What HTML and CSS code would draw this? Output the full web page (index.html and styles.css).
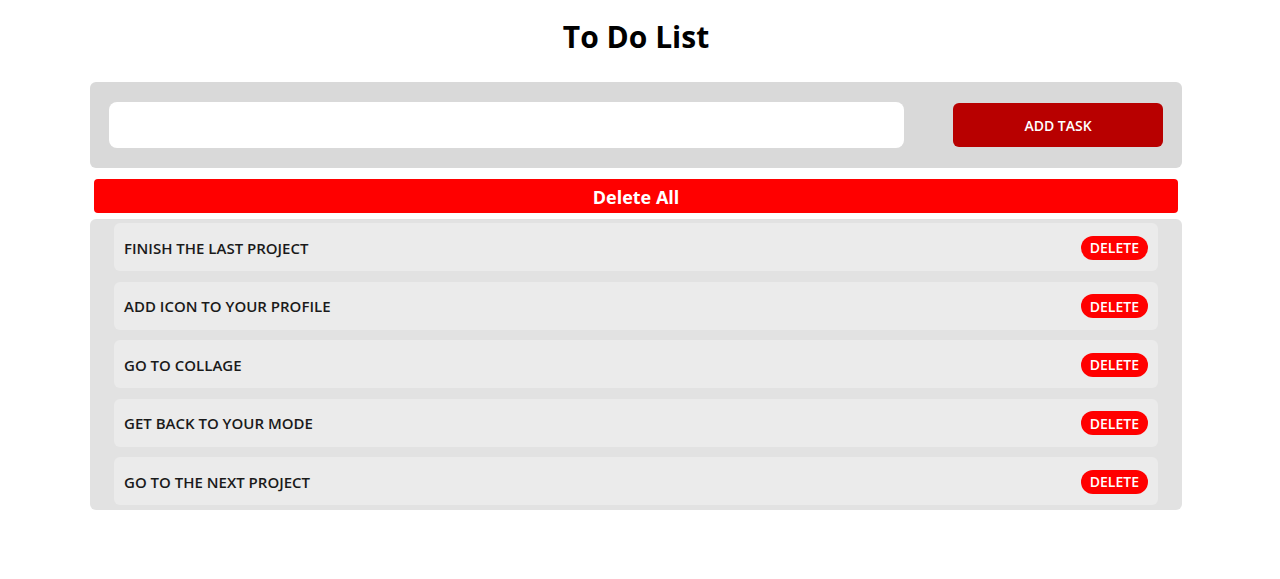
FILE: index.html
```html
<!DOCTYPE html>
<html>
<head>
<meta charset="utf-8">
<link rel="stylesheet" href="styles.css">
</head>
<body>
<div class="app">
  <h1 class="title">To Do List</h1>
  <div class="form-box">
    <input class="task-input" type="text">
    <button class="add-btn">ADD TASK</button>
  </div>
  <button class="delete-all">Delete All</button>
  <ul class="list">
    <li class="item"><span class="item-text">FINISH THE LAST PROJECT</span><button class="del-btn">DELETE</button></li>
    <li class="item"><span class="item-text">ADD ICON TO YOUR PROFILE</span><button class="del-btn">DELETE</button></li>
    <li class="item"><span class="item-text">GO TO COLLAGE</span><button class="del-btn">DELETE</button></li>
    <li class="item"><span class="item-text">GET BACK TO YOUR MODE</span><button class="del-btn">DELETE</button></li>
    <li class="item"><span class="item-text">GO TO THE NEXT PROJECT</span><button class="del-btn">DELETE</button></li>
  </ul>
</div>
</body>
</html>
```
FILE: styles.css
```css
* { box-sizing: border-box; }
body {
  margin: 0;
  padding: 0 8px 0 0;
  font-family: "Open Sans", "Noto Sans", sans-serif;
  background: #fff;
}
.app {
  width: 1092px;
  margin: 0 auto;
  display: flex;
  flex-direction: column;
}
.title {
  margin: 16px 0 0;
  height: 66px;
  text-align: center;
  font-size: 30px;
  font-weight: 700;
  color: #000;
  line-height: 42px;
}
.form-box {
  background: #d9d9d9;
  border-radius: 6px;
  height: 86px;
  padding: 20px 19px 20px 19px;
  display: flex;
  align-items: center;
  gap: 49px;
}
.task-input {
  flex: 1;
  height: 46px;
  border: none;
  border-radius: 8px;
  background: #fff;
  outline: none;
}
.add-btn {
  width: 210px;
  height: 44px;
  padding-top: 2px;
  border: none;
  border-radius: 6px;
  background: #b80000;
  color: #fff;
  font-family: inherit;
  font-size: 14px;
  font-weight: 600;
}
.delete-all {
  margin: 11px 4px 0;
  height: 34px;
  padding-top: 3px;
  border: none;
  border-radius: 4px;
  background: #ff0000;
  color: #fff;
  font-family: inherit;
  font-size: 18px;
  font-weight: 700;
}
.list {
  list-style: none;
  margin: 6px 0 0;
  padding: 4px 24px 5px;
  background: #e2e2e2;
  border-radius: 6px;
  display: flex;
  flex-direction: column;
  gap: 10.5px;
}
.item {
  height: 48px;
  background: #ebebeb;
  border-radius: 6px;
  display: flex;
  align-items: center;
  justify-content: space-between;
  padding: 1px 10px 0;
}
.item-text {
  font-size: 15px;
  font-weight: 600;
  color: #1a1a1a;
}
.del-btn {
  height: 24px;
  padding: 0 9px;
  border: none;
  border-radius: 12px;
  background: #ff0000;
  color: #fff;
  font-family: inherit;
  font-size: 14px;
  font-weight: 600;
}
```
